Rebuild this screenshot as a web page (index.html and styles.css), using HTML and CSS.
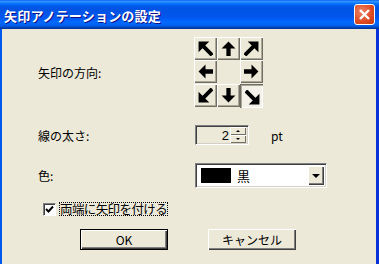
FILE: index.html
```html
<!DOCTYPE html>
<html lang="ja">

<head>
    <meta charset="UTF-8">
    <title>矢印アノテーションの設定</title>
    <link rel="stylesheet" href="styles.css">
</head>

<body>
    <svg class="defs" width="0" height="0">
        <symbol id="arrow-up" viewBox="0 0 14 14">
            <polygon points="7,0.5 13.5,7 9,7 9,14 5,14 5,7 0.5,7" />
        </symbol>
        <symbol id="arrow-diag" viewBox="0 0 14 14">
            <polygon points="0.5,0.5 10.5,0.5 0.5,10.5" />
            <line x1="3" y1="3" x2="13.2" y2="13.2" stroke="#000" stroke-width="3.6" />
        </symbol>
    </svg>

    <div class="window">
        <div class="titlebar">
            <span class="title">矢印アノテーションの設定</span>
            <button class="close-btn">
                <svg width="13" height="13" viewBox="0 0 13 13">
                    <path d="M2 2 L11 11 M11 2 L2 11" stroke="#fff" stroke-width="2.4" />
                </svg>
            </button>
        </div>

        <div class="content">
            <div class="row row-dir">
                <span class="label">矢印の方向:</span>
                <div class="arrows">
                    <button class="arrow-btn"><svg class="rot-0"><use href="#arrow-diag" /></svg></button>
                    <button class="arrow-btn"><svg class="rot-0"><use href="#arrow-up" /></svg></button>
                    <button class="arrow-btn"><svg class="rot-90"><use href="#arrow-diag" /></svg></button>
                    <button class="arrow-btn"><svg class="rot-270"><use href="#arrow-up" /></svg></button>
                    <span class="arrow-gap"></span>
                    <button class="arrow-btn"><svg class="rot-90"><use href="#arrow-up" /></svg></button>
                    <button class="arrow-btn"><svg class="rot-270"><use href="#arrow-diag" /></svg></button>
                    <button class="arrow-btn"><svg class="rot-180"><use href="#arrow-up" /></svg></button>
                    <button class="arrow-btn pressed"><svg class="rot-180"><use href="#arrow-diag" /></svg></button>
                </div>
            </div>

            <div class="row row-width">
                <span class="label">線の太さ:</span>
                <div class="spin">
                    <span class="spin-value">2</span>
                    <div class="spin-btns">
                        <span class="spin-btn"><i class="tri-up"></i></span>
                        <span class="spin-btn"><i class="tri-down"></i></span>
                    </div>
                </div>
                <span class="unit">pt</span>
            </div>

            <div class="row row-color">
                <span class="label">色:</span>
                <div class="combo">
                    <span class="swatch"></span>
                    <span class="combo-text">黒</span>
                    <span class="combo-btn"><i class="tri-down big"></i></span>
                </div>
            </div>

            <div class="check-row">
                <span class="checkbox">
                    <svg width="9" height="9" viewBox="0 0 9 9">
                        <path d="M1 4 L3.5 6.5 L8 1.5" fill="none" stroke="#000" stroke-width="2" />
                    </svg>
                </span>
                <span class="check-label">両端に矢印を付ける</span>
            </div>

            <div class="buttons">
                <button class="btn default">OK</button>
                <button class="btn">キャンセル</button>
            </div>
        </div>
    </div>
</body>

</html>
```

FILE: styles.css
```css
body {
    margin: 0;
    width: 379px;
    height: 264px;
    overflow: hidden;
    font-family: 'Noto Sans CJK JP', 'Liberation Sans', sans-serif;
    font-size: 12px;
    color: #000;
    background-color: #ece9d8;
}

.defs {
    position: absolute;
}

.window {
    height: 264px;
    display: flex;
    flex-direction: column;
    background-color: #ece9d8;
}

/* Title bar */
.titlebar {
    height: 29px;
    display: flex;
    align-items: center;
    justify-content: space-between;
    padding: 0 4px 0 4px;
    box-sizing: border-box;
    background: linear-gradient(#0058ee, #3593ff 4%, #288eff 7%, #127dff 10%, #036ffc 14%, #0262ee 18%, #0057e5 24%, #0054e3 30%, #0055eb 56%, #005bf5 66%, #026afe 76%, #0062ef 86%, #0052d6 92%, #0040ab 96%, #003092 100%);
}

.title {
    color: #fff;
    font-weight: bold;
    font-size: 13px;
    letter-spacing: 0.2px;
    text-shadow: 1px 1px #0f1089;
    margin-top: 1px;
}

.close-btn {
    width: 21px;
    height: 21px;
    padding: 0;
    border: 1px solid #fff;
    border-radius: 3px;
    background: radial-gradient(circle at 35% 35%, #f0866a, #df4f26 55%, #c2350f);
    display: flex;
    align-items: center;
    justify-content: center;
}

/* Content */
.content {
    flex: 1;
    border-left: 2px solid #0058ee;
    border-right: 3px solid #0831d9;
    padding: 8px 0 0 36px;
    display: flex;
    flex-direction: column;
}

.row {
    display: flex;
    align-items: center;
}

.label {
    width: 157px;
    flex-shrink: 0;
}

.arrows {
    margin-left: -1px;
    display: grid;
    grid-template-columns: 23px 23px 23px;
    grid-template-rows: 23px 24px 24px;
}

.arrow-btn {
    width: 23px;
    height: 23px;
    padding: 0;
    border: none;
    background-color: #ece9d8;
    box-shadow: inset 1px 1px #fff, inset -1px -1px #716f64, inset -2px -2px #aca899;
    display: flex;
    align-items: center;
    justify-content: center;
}

.arrow-btn.pressed {
    height: 24px;
    background-color: #f4f2e8;
    box-shadow: inset 1px 1px #716f64, inset 2px 2px #aca899, inset -1px -1px #fff;
}

.arrow-btn svg {
    width: 15px;
    height: 15px;
    fill: #000;
}

.arrow-btn.pressed svg {
    margin: 2px 0 0 2px;
}

.rot-90 {
    transform: rotate(90deg);
}

.rot-180 {
    transform: rotate(180deg);
}

.rot-270 {
    transform: rotate(270deg);
}

/* Line width spinner */
.row-width {
    margin-top: 17px;
}

.spin {
    width: 54px;
    height: 20px;
    box-sizing: border-box;
    border: 1px solid;
    border-color: #808080 #fff #fff #808080;
    box-shadow: inset 1px 1px #404040, inset -1px -1px #d4d0c8;
    display: flex;
    align-items: center;
    justify-content: flex-end;
    padding: 2px 2px 2px 0;
}

.spin-value {
    font-family: 'Liberation Sans', sans-serif;
    font-size: 13px;
    margin-right: 1px;
}

.spin-btns {
    display: flex;
    flex-direction: column;
}

.spin-btn {
    width: 16px;
    height: 8px;
    box-sizing: border-box;
    background-color: #ece9d8;
    box-shadow: inset 1px 1px #fff, inset -1px -1px #716f64;
    display: flex;
    align-items: center;
    justify-content: center;
}

.tri-up {
    border-left: 2px solid transparent;
    border-right: 2px solid transparent;
    border-bottom: 2px solid #000;
}

.tri-down {
    border-left: 2px solid transparent;
    border-right: 2px solid transparent;
    border-top: 2px solid #000;
}

.tri-down.big {
    border-left-width: 4px;
    border-right-width: 4px;
    border-top-width: 4px;
}

.unit {
    margin-left: 22px;
}

/* Colour combo */
.row-color {
    margin-top: 18px;
}

.combo {
    width: 132px;
    height: 25px;
    box-sizing: border-box;
    border: 1px solid;
    border-color: #808080 #fff #fff #808080;
    box-shadow: inset 1px 1px #404040, inset -1px -1px #d4d0c8;
    background-color: #fff;
    display: flex;
    align-items: center;
    padding: 2px;
}

.swatch {
    width: 30px;
    height: 15px;
    margin-left: 3px;
    background-color: #000;
}

.combo-text {
    flex: 1;
    margin-left: 6px;
    font-size: 13px;
}

.combo-btn {
    width: 16px;
    height: 19px;
    background-color: #ece9d8;
    box-shadow: inset 1px 1px #fff, inset -1px -1px #404040, inset -2px -2px #808080;
    display: flex;
    align-items: center;
    justify-content: center;
}

/* Checkbox */
.check-row {
    margin: 14px 0 0 5px;
    display: flex;
    align-items: center;
    gap: 3px;
}

.checkbox {
    width: 13px;
    height: 13px;
    box-sizing: border-box;
    border: 1px solid;
    border-color: #808080 #fff #fff #808080;
    box-shadow: inset 1px 1px #404040;
    background-color: #fff;
    display: flex;
    align-items: center;
    justify-content: center;
}

.check-label {
    outline: 1px dotted #000;
    outline-offset: -1px;
    padding: 0 1px;
    height: 14px;
    line-height: 14px;
    font-size: 12.5px;
    letter-spacing: -0.6px;
}

/* Buttons */
.buttons {
    margin: 13px 0 0 42px;
    display: flex;
    gap: 40px;
}

.btn {
    width: 88px;
    height: 21px;
    padding: 0;
    border: none;
    font-family: 'Noto Sans CJK JP', 'Liberation Sans', sans-serif;
    font-size: 12px;
    background-color: #ece9d8;
    box-shadow: inset 1px 1px #fff, inset -1px -1px #404040, inset -2px -2px #808080;
}

.btn.default {
    border: 1px solid #000;
}
```
